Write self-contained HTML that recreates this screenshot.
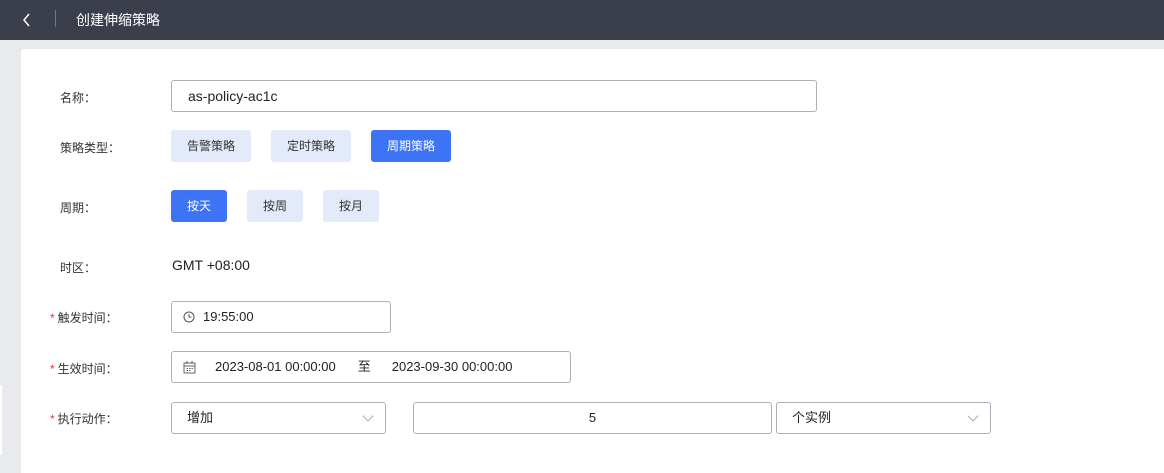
<!DOCTYPE html>
<html><head><meta charset="utf-8"><style>
*{box-sizing:border-box;margin:0;padding:0}
body{width:1164px;height:473px;overflow:hidden;background:#e9eaee;font-family:"Liberation Sans","Noto Sans CJK SC",sans-serif;color:#333;position:relative}
.hdr{position:absolute;left:0;top:0;width:1164px;height:40px;background:#3b3e4b;color:#fff}
.hdr .t{position:absolute;left:76px;top:10px;font-size:14px}
.hdr .sep{position:absolute;left:55px;top:10px;width:1px;height:17px;background:#777}
.card{position:absolute;left:21px;top:49px;width:1143px;height:424px;background:#fff;border-radius:3px 0 0 0}
.lbl{position:absolute;font-size:12px;color:#333}
.star{color:#e33;margin-right:3px}
.box{position:absolute;border:1px solid #adb0b8;border-radius:3px;background:#fff;font-size:13px;color:#222}
.btn{position:absolute;height:32px;border-radius:3px;background:#e3eafa;color:#333;font-size:12px;text-align:center;line-height:32px}
.btn.on{background:#3d74f5;color:#fff}
.chev{position:absolute;width:8px;height:8px;border-right:1px solid #aaa;border-bottom:1px solid #aaa;transform:rotate(45deg)}
</style></head><body>
<div class="hdr">
<svg style="position:absolute;left:22px;top:13px" width="10" height="14"><path d="M7 1 L2 7 L7 13" stroke="#fff" stroke-width="1.5" fill="none"/></svg>
<div class="sep"></div><div class="t">创建伸缩策略</div></div>
<div style="position:absolute;left:0;top:385px;width:2px;height:70px;background:#fff"></div>
<div class="card"></div>
<div class="lbl" style="left:60px;top:89px">名称：</div>
<div class="box" style="left:171px;top:80px;width:646px;height:32px;line-height:30px;padding-left:16px;font-size:14px">as-policy-ac1c</div>
<div class="lbl" style="left:60px;top:139px">策略类型：</div>
<div class="btn" style="left:171px;top:130px;width:80px">告警策略</div>
<div class="btn" style="left:271px;top:130px;width:80px">定时策略</div>
<div class="btn on" style="left:371px;top:130px;width:80px">周期策略</div>
<div class="lbl" style="left:60px;top:199px">周期：</div>
<div class="btn on" style="left:171px;top:190px;width:56px">按天</div>
<div class="btn" style="left:247px;top:190px;width:56px">按周</div>
<div class="btn" style="left:323px;top:190px;width:56px">按月</div>
<div class="lbl" style="left:60px;top:259px">时区：</div>
<div style="position:absolute;left:172px;top:257px;font-size:14px;color:#222">GMT +08:00</div>
<div class="lbl" style="left:50px;top:309px"><span class="star">*</span>触发时间：</div>
<div class="box" style="left:171px;top:301px;width:220px;height:32px;line-height:30px;padding-left:31px">19:55:00
<svg style="position:absolute;left:11px;top:9px" width="12" height="12"><circle cx="6" cy="6" r="5" stroke="#555" fill="none"/><path d="M6 3V6H8.5" stroke="#555" fill="none"/></svg></div>
<div class="lbl" style="left:50px;top:360px"><span class="star">*</span>生效时间：</div>
<div class="box" style="left:171px;top:351px;width:400px;height:32px;line-height:30px;padding-left:43px">2023-08-01 00:00:00<span style="margin-left:22px">至</span><span style="margin-left:21px">2023-09-30 00:00:00</span>
<svg style="position:absolute;left:11px;top:9px" width="13" height="13"><rect x="1" y="2" width="11" height="10" stroke="#666" fill="none"/><path d="M1 5H12M4 0V3M9 0V3M3.5 7.5H5M6 7.5H7.5M8.5 7.5H10M3.5 9.5H5M6 9.5H7.5" stroke="#666"/></svg></div>
<div class="lbl" style="left:50px;top:410px"><span class="star">*</span>执行动作：</div>
<div class="box" style="left:171px;top:402px;width:215px;height:32px;line-height:30px;padding-left:15px">增加<div class="chev" style="left:192px;top:9px"></div></div>
<div class="box" style="left:413px;top:402px;width:359px;height:32px;line-height:30px;text-align:center">5</div>
<div class="box" style="left:776px;top:402px;width:215px;height:32px;line-height:30px;padding-left:15px">个实例<div class="chev" style="left:192px;top:9px"></div></div>
</body></html>
